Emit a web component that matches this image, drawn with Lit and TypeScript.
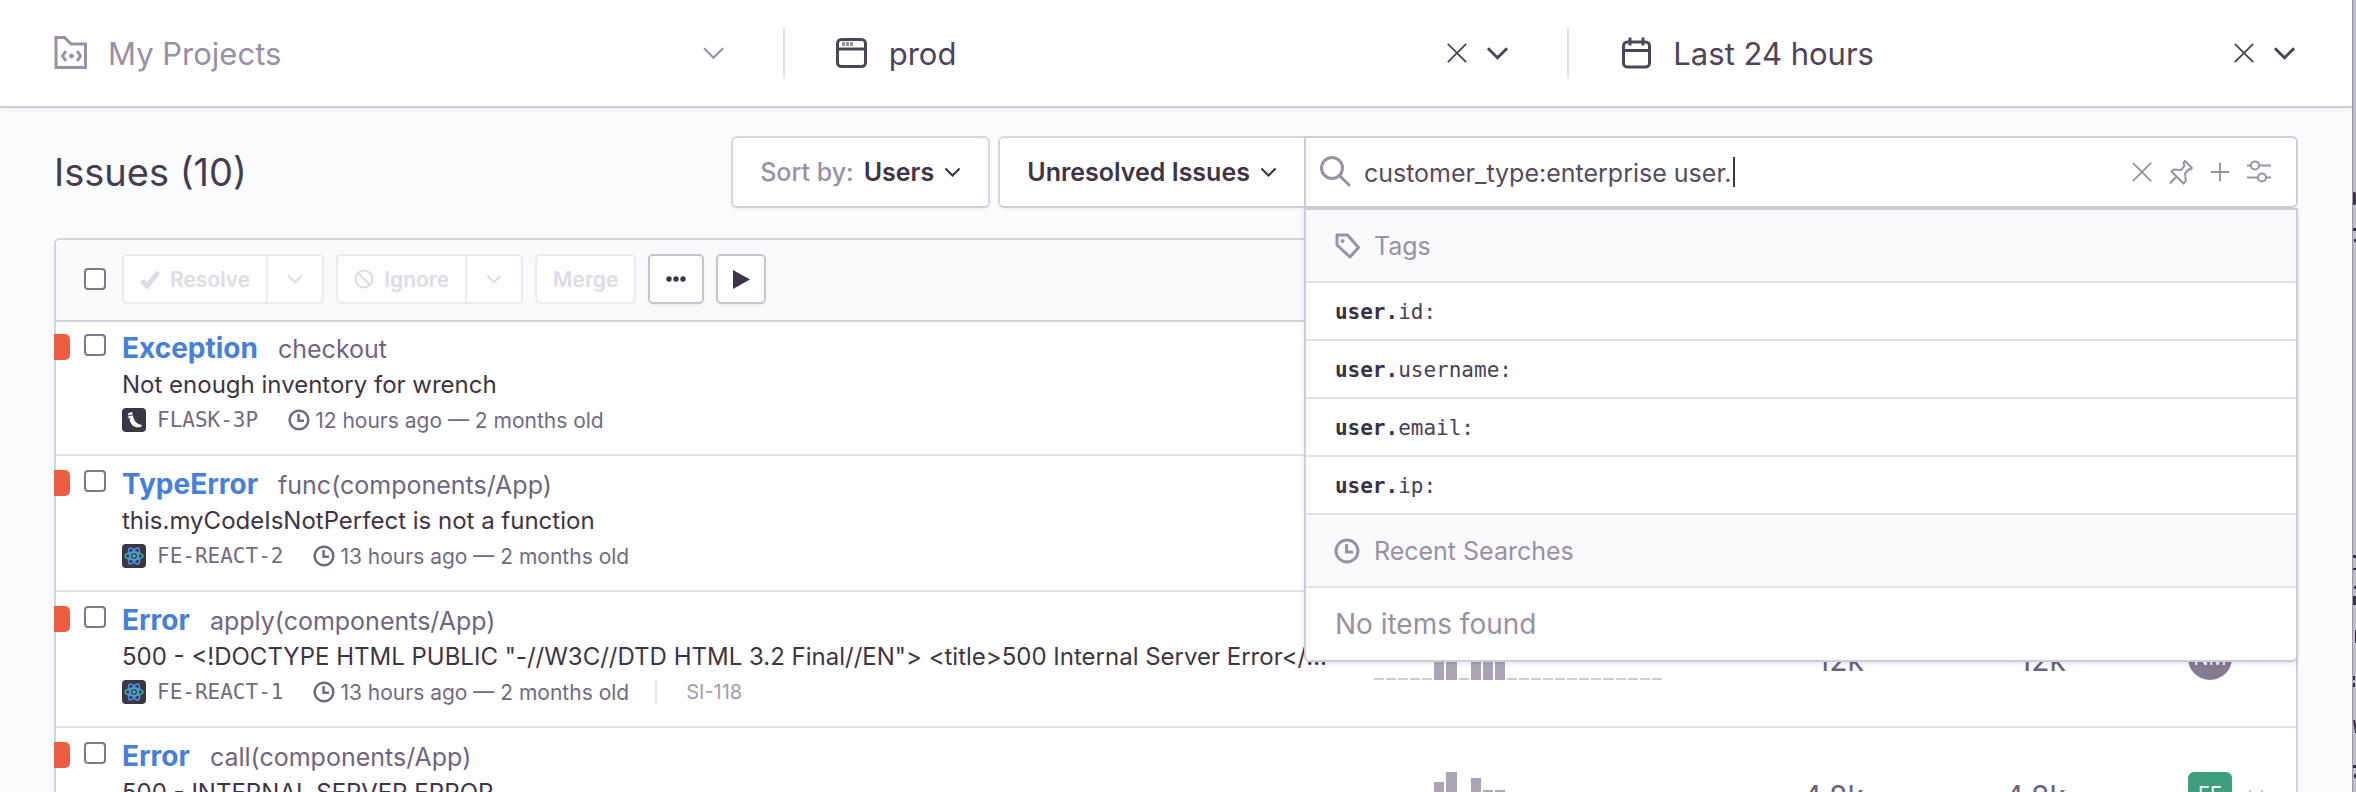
import { LitElement, html, svg, css, nothing } from "lit";
import { customElement, property, state } from "lit/decorators.js";

const icons = {
  project: svg`<path d="M3 2.500h8.500l6.500 6.500h14.500v23.500H3z" transform="translate(-1 1)"/><path d="M12 17l-3.500 5l3.500 5M23 17l3.500 5l-3.500 5"/><circle cx="17.500" cy="22" r="2" fill="currentColor" stroke-width="1"/>`,
  window: svg`<rect x="2.500" y="4.500" width="28" height="27" rx="4"/><path d="M3 14h27"/><path d="M7 9h12" stroke-width="4" stroke-dasharray="3 1" opacity=".6"/>`,
  calendar: svg`<rect x="4.500" y="7" width="26" height="25" rx="4"/><path d="M5 15.500h25M11 2.500v8M24 2.500v8"/>`,
  chevron: svg`<path d="M2 2l10 10L22 2"/>`,
  close: svg`<path d="M2 2l20 20M22 2L2 22"/>`,
  plus: svg`<path d="M12 2v20M2 12h20"/>`,
  search: svg`<circle cx="12" cy="12" r="10.500"/><path d="M19.500 19.500L30 30"/>`,
  pin: svg`<path d="M17 2l7 7l-1.500 1.500l-1.500-.3l-4 4.300l.8 7.500l-2.300 2.500L3.500 12.500l2-2l7.500.5l3.500-4.200l-1-2.800zM8.500 17.500L2 24.500"/>`,
  sliders: svg`<path d="M1 6.500h4M13 6.500h12M1 18.500h11M20 18.500h5"/><circle cx="9" cy="6.500" r="4"/><circle cx="16" cy="18.500" r="4"/>`,
  tag: svg`<path d="M3 2h10.500l11 12.500l-8.500 9.500L3 12z" stroke-linejoin="round"/><circle cx="8.500" cy="8" r="1.500" fill="currentColor" stroke-width="1"/>`,
  clock: svg`<circle cx="13" cy="13" r="11"/><path d="M12.500 6v8H19"/>`,
  check: svg`<path d="M2 11.500l5 5.500L18.500 3" stroke-width="5"/>`,
  ban: svg`<circle cx="10" cy="10" r="8.500"/><path d="M4 4l12 12"/>`,
  dots: svg`<g fill="currentColor" stroke="none"><circle cx="3" cy="3" r="2.700"/><circle cx="10" cy="3" r="2.700"/><circle cx="17" cy="3" r="2.700"/></g>`,
  play: svg`<path d="M1 1l17 9.500L1 20z" fill="currentColor" stroke="none"/>`,
  flask: svg`<rect width="24" height="24" rx="4" fill="#3b3644" stroke="none"/><path d="M6.500 5l3.500-1l.8 2.500c.6 5.500 3 9.500 9.200 10.500l-1 2c-6.500 1.500-11-2-11.500-9l-1.800-.5z" fill="#fff" stroke="none"/><path d="M6 8l5-1.200" stroke="#3b3644" stroke-width="1"/>`,
  react: svg`<rect width="24" height="24" rx="4" fill="#3b3644" stroke="none"/><g stroke="#3fb5a0" stroke-width="1.600"><ellipse cx="12" cy="12" rx="9" ry="3.600"/><ellipse cx="12" cy="12" rx="9" ry="3.600" transform="rotate(60 12 12)" stroke="#4f93e0"/><ellipse cx="12" cy="12" rx="9" ry="3.600" transform="rotate(120 12 12)" stroke="#4f93e0"/></g><circle cx="12" cy="12" r="1.800" fill="#3fb5a0" stroke="none"/>`,
};
type IconName = keyof typeof icons;

const icon = (name: IconName, w: number, h: number, box: string, stroke = 2) => html`
  <svg width=${w} height=${h} viewBox=${box} fill="none" stroke="currentColor" stroke-width=${stroke} aria-hidden="true">${icons[name]}</svg>`;

const chevron = (w: number, stroke = 3) => icon("chevron", w, Math.round(w * 0.6), "0 0 24 14", stroke);

interface Issue {
  type: string;
  culprit: string;
  message: string;
  platform: "flask" | "react";
  shortId: string;
  age: string;
  ticket?: string;
  stats?: { bars: number[]; events: string; users: string; owner: string; team: boolean };
}

const quiet = (n: number) => Array<number>(n).fill(2);

const ISSUES: Issue[] = [
  { type: "Exception", culprit: "checkout", message: "Not enough inventory for wrench", platform: "flask", shortId: "FLASK-3P", age: "12 hours ago — 2 months old" },
  { type: "TypeError", culprit: "func(components/App)", message: "this.myCodeIsNotPerfect is not a function", platform: "react", shortId: "FE-REACT-2", age: "13 hours ago — 2 months old" },
  {
    type: "Error", culprit: "apply(components/App)",
    message: '500 - <!DOCTYPE HTML PUBLIC "-//W3C//DTD HTML 3.2 Final//EN"> <title>500 Internal Server Error</title>',
    platform: "react", shortId: "FE-REACT-1", age: "13 hours ago — 2 months old", ticket: "SI-118",
    stats: { bars: [...quiet(5), 38, 44, 2, 42, 30, 30, ...quiet(13)], events: "12k", users: "12k", owner: "NM", team: false },
  },
  {
    type: "Error", culprit: "call(components/App)", message: "500 - INTERNAL SERVER ERROR",
    platform: "react", shortId: "FE-REACT-3", age: "13 hours ago — 2 months old",
    stats: { bars: [...quiet(5), 34, 44, 2, 38, 26, 26, ...quiet(13)], events: "4.8k", users: "4.8k", owner: "EE", team: true },
  },
];

const base = css`
  * { box-sizing: border-box; }
  button, input { font: inherit; color: inherit; margin: 0; }
  button { background: none; border: 0; padding: 0; display: flex; align-items: center; }
  svg { display: block; flex: none; }
  .check {
    appearance: none; flex: none; width: 22px; height: 22px;
    border: 2px solid #80768e; border-radius: 4px; background: #fff;
  }
`;

@customElement("global-header")
class GlobalHeader extends LitElement {
  static styles = [base, css`
    :host {
      display: grid; grid-template-columns: 1fr 2px 1fr 2px 1fr; align-items: center;
      height: 108px; flex: none;
      background: #fff; border-bottom: 2px solid #d0cbdb;
      box-shadow: 0 2px 4px rgba(47, 29, 74, 0.05);
      font-size: 31px; color: #4e4459; position: relative;
    }
    .cell { display: flex; align-items: center; gap: 18px; padding: 0 58px 0 50px; }
    .cell:first-child { padding-left: 54px; color: #9990a5; }
    .cell:last-child { padding-right: 56px; }
    .pick { flex: 1; gap: 20px; text-align: left; }
    .divider { height: 50px; background: #e3dfea; }
  `];
  render() {
    return html`
      <div class="cell">
        <button class="pick">${icon("project", 34, 38, "0 0 34 38", 3)}<span>My Projects</span></button>
        <button aria-label="Choose projects">${chevron(23, 2)}</button>
      </div>
      <span class="divider"></span>
      <div class="cell">
        <button class="pick">${icon("window", 34, 36, "0 0 34 36", 3)}<span>prod</span></button>
        <button aria-label="Clear environment">${icon("close", 22, 22, "0 0 24 24", 2)}</button>
        <button aria-label="Choose environment">${chevron(23, 3)}</button>
      </div>
      <span class="divider"></span>
      <div class="cell">
        <button class="pick">${icon("calendar", 34, 36, "0 0 34 36", 3)}<span>Last 24 hours</span></button>
        <button aria-label="Clear dates">${icon("close", 22, 22, "0 0 24 24", 2)}</button>
        <button aria-label="Choose dates">${chevron(23, 3)}</button>
      </div>`;
  }
}

@customElement("smart-search")
class SmartSearch extends LitElement {
  @state() private query = "customer_type:enterprise user.";
  static styles = [base, css`
    :host { display: block; position: relative; font-size: 25px; }
    .bar {
      display: flex; align-items: center; height: 72px; padding: 0 24px 0 14px;
      background: #fff; border: 2px solid #d0cbd8; border-radius: 0 6px 6px 0; color: #9a91a7;
    }
    .box { display: flex; align-items: center; flex: 1; min-width: 0; margin-left: 12px; color: #554b61; }
    .box input { field-sizing: content; border: 0; padding: 2px 0 0; outline: 0; background: none; min-width: 4px; height: 36px; }
    .caret { width: 2px; height: 30px; margin-left: 2px; background: #3e3446; }
    .actions { display: flex; align-items: center; gap: 15px; }
    .menu {
      position: absolute; z-index: 2; top: 100%; left: 0; right: 0;
      background: #fff; border: 2px solid #d0cbd8; border-radius: 0 0 6px 6px;
      box-shadow: 0 2px 4px rgba(47, 29, 74, 0.12);
    }
    .head {
      display: flex; align-items: center; gap: 14px; height: 73px; padding: 0 28px;
      background: #fafafc; border-bottom: 2px solid #e4e0ea; color: #9990a5;
    }
    .list { list-style: none; margin: 0; padding: 0; }
    .item {
      width: 100%; height: 58px; padding: 2px 29px 0; border-bottom: 2px solid #e4e0ea;
      font-family: "DejaVu Sans Mono", monospace; font-size: 21px; color: #4a4056;
    }
    .item b { color: #3a3044; }
    .none { height: 72px; padding: 0 29px; display: flex; align-items: center; font-size: 28px; color: #9990a5; }
  `];
  render() {
    return html`
      <div class="bar">
        ${icon("search", 32, 32, "0 0 32 32", 3)}
        <div class="box">
          <input aria-label="Search events" .value=${this.query} @input=${(e: Event) => (this.query = (e.target as HTMLInputElement).value)} />
          <span class="caret"></span>
        </div>
        <div class="actions">
          <button aria-label="Clear search">${icon("close", 22, 22, "0 0 24 24", 2)}</button>
          <button aria-label="Pin search">${icon("pin", 26, 26, "0 0 26 26", 2)}</button>
          <button aria-label="Save search">${icon("plus", 22, 22, "0 0 24 24", 2)}</button>
          <button aria-label="Search builder">${icon("sliders", 26, 26, "0 0 26 26", 2)}</button>
        </div>
      </div>
      <div class="menu">
        <div class="head">${icon("tag", 26, 26, "0 0 26 26", 3)}<span>Tags</span></div>
        <ul class="list">
          ${["id", "username", "email", "ip"].map((t) => html`<li><button class="item"><b>user.</b>${t}:</button></li>`)}
        </ul>
        <div class="head">${icon("clock", 26, 26, "0 0 26 26", 3)}<span>Recent Searches</span></div>
        <div class="none">No items found</div>
      </div>`;
  }
}

@customElement("issue-row")
class IssueRow extends LitElement {
  @property({ attribute: false }) issue!: Issue;
  static styles = [base, css`
    :host {
      display: flex; align-items: flex-start; height: 136px; padding: 10px 32px 0 0;
      border-bottom: 2px solid #e4e0ea;
    }
    .level { flex: none; width: 16px; height: 26px; margin: 4px 14px 0 -2px; background: #ec5e44; border-radius: 0 5px 5px 0; }
    .check { margin: 4px 16px 0 0; }
    .body { flex: 1; min-width: 0; }
    .line { display: flex; align-items: center; height: 36px; }
    .title { align-items: baseline; gap: 20px; line-height: 36px; font-size: 25px; color: #6f6580; }
    .title a { font-size: 28px; font-weight: 700; color: #4680d8; text-decoration: none; }
    .message { font-size: 24px; line-height: 38px; color: #3e3446; white-space: nowrap; overflow: hidden; text-overflow: ellipsis; height: 36px; }
    .meta { font-size: 21px; color: #736a82; }
    .id { font-family: "DejaVu Sans Mono", monospace; margin: 0 30px 0 11px; }
    .age { margin-left: 5px; }
    .ticket { margin-left: 26px; padding-left: 29px; border-left: 2px solid #e4e0ea; line-height: 22px; color: #a49cb0; font-size: 20px; }
    .stats { display: flex; flex: none; align-items: center; height: 44px; margin: 34px 0 0 44px; color: #80768e; }
    .chart { display: flex; align-items: flex-end; gap: 2px; width: 288px; height: 44px; }
    .bar { flex: 1; background: #aaa4b6; }
    .bar.quiet { background: #cfcad6; }
    .count { width: 202px; padding-top: 4px; text-align: right; font-size: 30px; line-height: 40px; color: #6c627c; }
    .owner {
      display: grid; place-items: center; width: 44px; height: 44px; margin: 0 16px 0 122px;
      border-radius: 50%; background: #847b92; color: #fff; font-size: 20px;
    }
    .owner.team { border-radius: 6px; background: #3f9d7b; }
    .assign { color: #c0bacb; }
  `];
  render() {
    const i = this.issue;
    const s = i.stats;
    return html`
      <span class="level"></span>
      <input class="check" type="checkbox" aria-label=${`Select ${i.shortId}`} />
      <div class="body">
        <div class="line title"><a href="#">${i.type}</a><span>${i.culprit}</span></div>
        <div class="message">${i.message}</div>
        <div class="line meta">
          ${icon(i.platform, 24, 24, "0 0 24 24", 1)}
          <span class="id">${i.shortId}</span>
          ${icon("clock", 22, 22, "0 0 26 26", 3)}
          <span class="age">${i.age}</span>
          ${i.ticket ? html`<span class="ticket">${i.ticket}</span>` : nothing}
        </div>
      </div>
      ${s ? html`
        <div class="stats">
          <div class="chart">${s.bars.map((h) => html`<span class="bar ${h > 2 ? "" : "quiet"}" style="height:${h}px"></span>`)}</div>
          <span class="count">${s.events}</span>
          <span class="count">${s.users}</span>
          <span class="owner ${s.team ? "team" : ""}">${s.owner}</span>
          <button class="assign" aria-label="Assign">${chevron(16, 3)}</button>
        </div>` : nothing}`;
  }
}

@customElement("app-root")
class AppRoot extends LitElement {
  static styles = [base, css`
    :host {
      display: flex; height: 100vh; overflow: hidden; background: #fafbfd;
      font-family: Inter, "Noto Sans", sans-serif; color: #3e3446;
    }
    .page { flex: 1; min-width: 0; display: flex; flex-direction: column; }
    .behind { flex: none; background: #c2bdcb; border-left: 1px solid #9d97a8; }
    main { padding: 28px 54px 0 54px; }
    .top { display: flex; align-items: center; height: 72px; }
    h1 { flex: 1; margin: 0; font-size: 38px; font-weight: 400; white-space: nowrap; color: #463c52; }
    .drop {
      justify-content: center; gap: 10px; height: 72px; padding: 0 27px; font-size: 25px; font-weight: 600;
      background: #fff; border: 2px solid #d9d5e0; border-bottom-color: #d0cbd8; border-radius: 6px;
      box-shadow: 0 2px 2px rgba(47, 29, 74, 0.04); white-space: nowrap;
    }
    .drop .dim { font-weight: 500; color: #9990a5; }
    .filter { margin-left: 8px; border-right: 0; border-radius: 6px 0 0 6px; }
    smart-search { flex: 0 0 44.3%; }
    .panel { margin-top: 30px; background: #fff; border: 2px solid #d6d1de; border-radius: 6px 6px 0 0; }
    .toolbar {
      display: flex; align-items: center; gap: 12px; padding: 14px 28px 16px; margin-bottom: -2px;
      background: #fafafc; border-bottom: 2px solid #d6d1de; border-radius: 5px 5px 0 0;
    }
    .toolbar .check { margin-right: 4px; }
    .group { display: flex; }
    .btn {
      justify-content: center; gap: 10px; height: 50px; padding: 0 16px; font-size: 21px; font-weight: 600;
      background: #fff; border: 2px solid #c9c4d1; border-radius: 5px; box-shadow: 0 2px 2px rgba(47, 29, 74, 0.05);
    }
    .btn:disabled { color: #dfdbe5; background: #fdfdfe; border-color: #eceaf0; box-shadow: none; }
    .group .btn:first-child { border-radius: 5px 0 0 5px; }
    .group .btn:last-child { border-left: 0; border-radius: 0 5px 5px 0; padding: 0 19px; }
    .square { padding: 0 14px; }
  `];
  render() {
    return html`
      <div class="page">
        <global-header></global-header>
        <main>
          <div class="top">
            <h1>Issues (10)</h1>
            <button class="drop"><span class="dim">Sort by:</span><span>Users</span>${chevron(17, 3)}</button>
            <button class="drop filter"><span>Unresolved Issues</span>${chevron(17, 3)}</button>
            <smart-search></smart-search>
          </div>
          <section class="panel">
            <div class="toolbar">
              <input class="check" type="checkbox" aria-label="Select all" />
              <div class="group">
                <button class="btn" disabled>${icon("check", 20, 20, "0 0 20 20")}Resolve</button>
                <button class="btn" disabled aria-label="Resolve options">${chevron(16, 3)}</button>
              </div>
              <div class="group">
                <button class="btn" disabled>${icon("ban", 20, 20, "0 0 20 20")}Ignore</button>
                <button class="btn" disabled aria-label="Ignore options">${chevron(16, 3)}</button>
              </div>
              <button class="btn" disabled>Merge</button>
              <button class="btn" aria-label="More actions">${icon("dots", 20, 6, "0 0 20 6")}</button>
              <button class="btn square" aria-label="Enable live updates">${icon("play", 18, 21, "0 0 18 21")}</button>
            </div>
            ${ISSUES.map((i) => html`<issue-row .issue=${i}></issue-row>`)}
          </section>
        </main>
      </div>
      <svg class="behind" width="4" height="792" viewBox="0 0 4 792" preserveAspectRatio="xMinYMin slice" aria-hidden="true">
        <path fill="#3a3444" d="M0 192h2l2 4v6l-2 3H0zM0 228h4v3H0zM1 239h3v3H1zM0 555h4v3H0zM0 568h4v2H0zM1 586h3v3H1zM0 596h3v9H0zM2 630h2v13H2zM0 676h2v4H0zM0 683h2v4H0zM0 720h2l2 7v6H2zM0 765h4v3H0zM1 774h3v4H1z"/>
      </svg>`;
  }
}
